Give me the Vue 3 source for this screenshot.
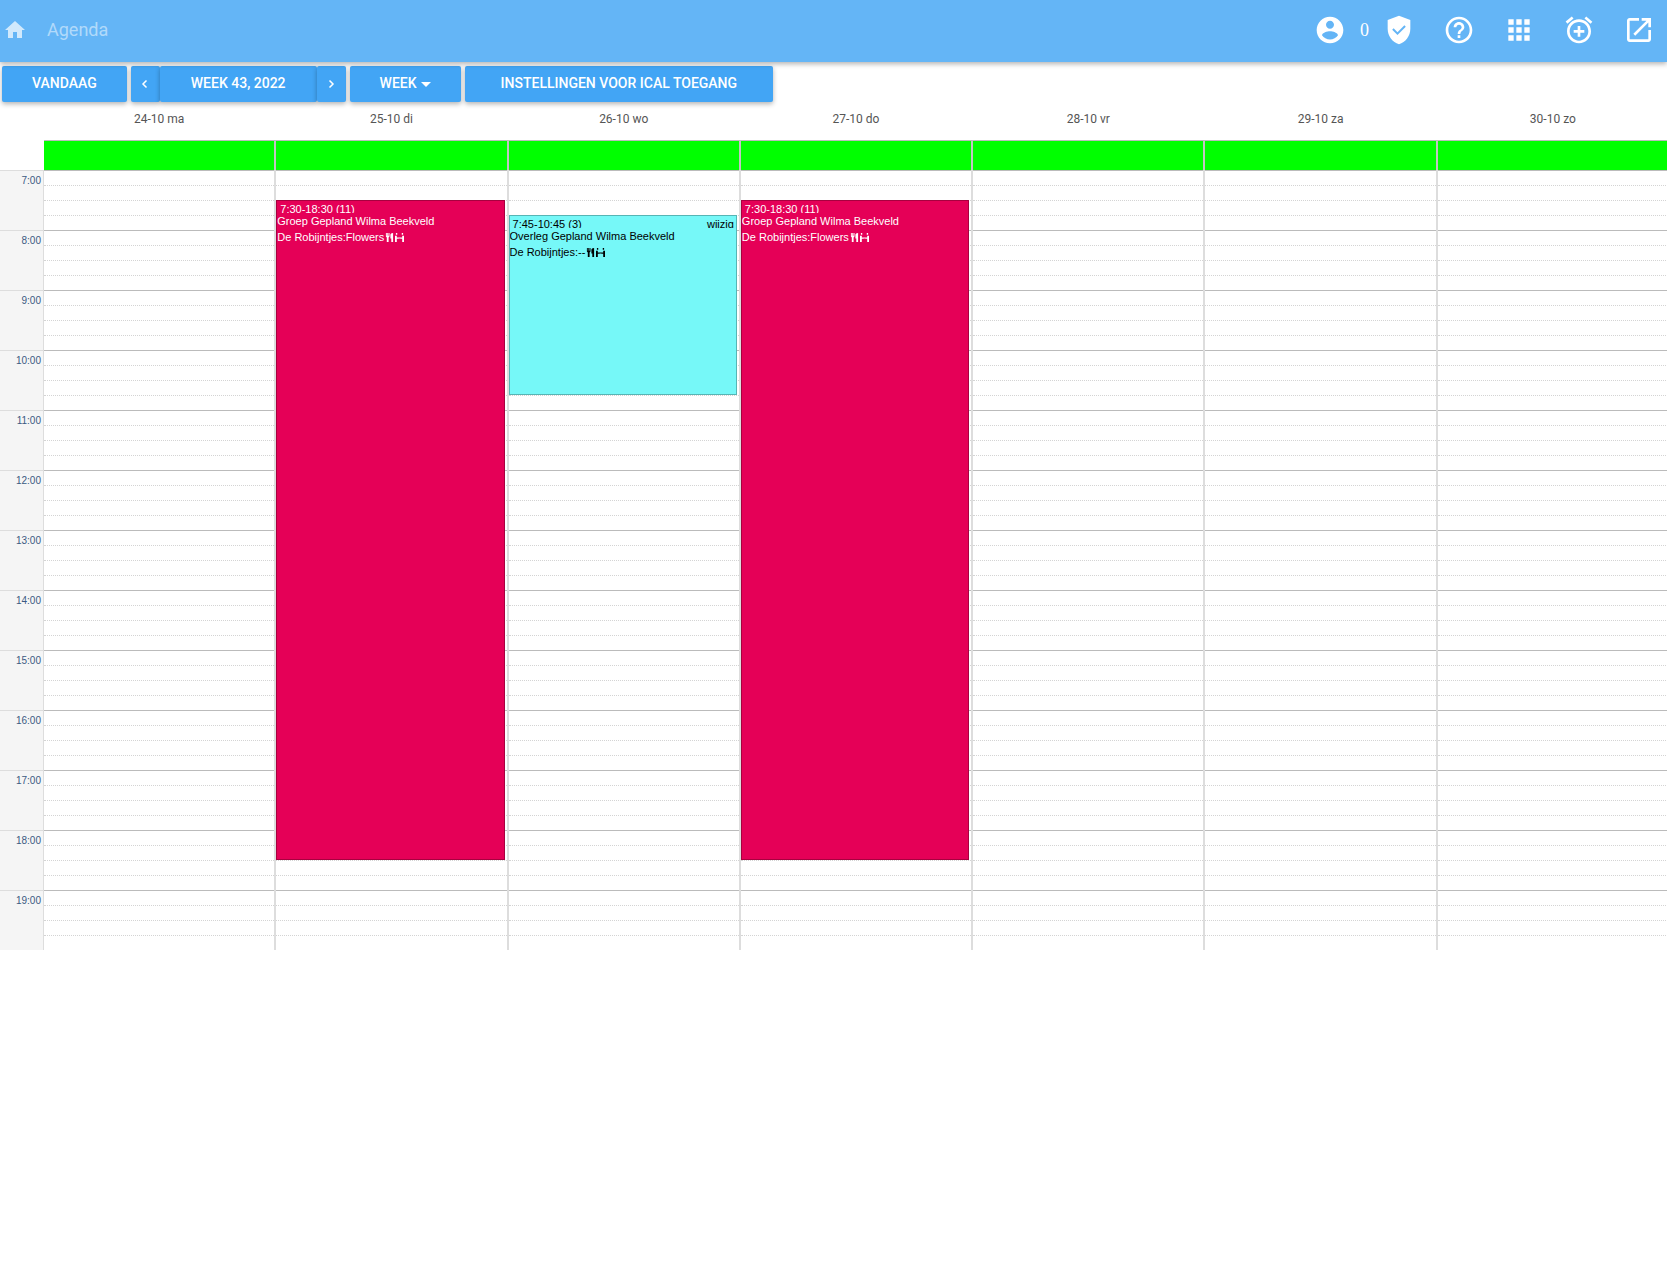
<template>
  <div class="agenda-page">
    <!-- Top bar -->
    <header class="app-bar">
      <nav class="app-nav">
        <a href="#" class="home-link" aria-label="Home">
          <svg viewBox="0 0 24 24"><path d="M10 20v-6h4v6h5v-8h3L12 3 2 12h3v8z" /></svg>
        </a>
        <a href="#" class="app-title">Agenda</a>
      </nav>
      <div class="app-actions">
        <button type="button" class="icon-btn account" aria-label="Account">
          <svg viewBox="0 0 24 24"><path :d="icons.account" /></svg>
        </button>
        <span class="counter">0</span>
        <button type="button" class="icon-btn shield" aria-label="Beveiliging">
          <svg viewBox="0 0 24 24"><path :d="icons.shield" /></svg>
        </button>
        <button v-for="action in actions" :key="action.label" type="button" class="icon-btn" :aria-label="action.label">
          <svg viewBox="0 0 24 24"><path :d="action.path" /></svg>
        </button>
      </div>
    </header>

    <!-- Toolbar -->
    <div class="toolbar">
      <button type="button" class="btn">Vandaag</button>
      <div class="btn-group">
        <button type="button" class="btn btn-arrow" aria-label="Vorige week">
          <svg viewBox="0 0 8 10"><path d="M5.500 1.500L2 5l3.500 3.500" /></svg>
        </button>
        <button type="button" class="btn btn-period">Week 43, 2022</button>
        <button type="button" class="btn btn-arrow" aria-label="Volgende week">
          <svg viewBox="0 0 8 10"><path d="M2.500 1.500L6 5 2.500 8.500" /></svg>
        </button>
      </div>
      <button type="button" class="btn">Week<span class="caret"></span></button>
      <button type="button" class="btn btn-wide">Instellingen voor iCal toegang</button>
    </div>

    <!-- Week calendar -->
    <main class="calendar">
      <div class="axis">
        <div class="axis-head"></div>
        <div v-for="hour in hours" :key="hour" class="axis-hour">{{ hour }}:00</div>
      </div>
      <div class="days">
        <section v-for="day in days" :key="day.label" class="day">
          <h2 class="day-head">{{ day.label }}</h2>
          <div class="all-day"></div>
          <div class="slots">
            <div
              v-for="n in slotCount"
              :key="n"
              class="slot"
              :class="{ 'slot-hour': n % 4 === 1 }"
              :style="{ gridRow: n }"
            ></div>
            <article
              v-for="event in day.events"
              :key="event.time"
              class="event"
              :class="event.type"
              :style="{ gridRow: slotRange(event) }"
            >
              <div class="event-time">
                <span>{{ event.time }}</span>
                <a v-if="event.editable" href="#">wijzig</a>
              </div>
              <div class="event-line">{{ event.title }}</div>
              <div class="event-line event-location">
                <span>{{ event.location }}</span>
                <svg class="event-icon" viewBox="0 0 10 10"><path :d="icons.cutlery" /></svg>
                <svg class="event-icon" viewBox="0 0 10 10"><path :d="icons.table" /></svg>
              </div>
            </article>
          </div>
        </section>
      </div>
    </main>
  </div>
</template>

<script setup>
const icons = {
  account: 'M12 2C6.480 2 2 6.480 2 12s4.480 10 10 10 10-4.480 10-10S17.520 2 12 2zm0 3c1.660 0 3 1.340 3 3s-1.340 3-3 3-3-1.340-3-3 1.340-3 3-3zm0 14.200c-2.500 0-4.710-1.280-6-3.220.03-1.990 4-3.080 6-3.080 1.990 0 5.970 1.090 6 3.080-1.290 1.940-3.500 3.220-6 3.220z',
  shield: 'M12 2L4 5v6.090c0 5.050 3.410 9.760 8 10.910 4.590-1.150 8-5.860 8-10.910V5l-8-3zm-1.060 13.540L7.200 11.800l1-1 2.740 2.740 4.860-4.860 1 1-5.860 5.860z',
  help: 'M11 18h2v-2h-2v2zm1-16C6.480 2 2 6.480 2 12s4.480 10 10 10 10-4.480 10-10S17.520 2 12 2zm0 18c-4.410 0-8-3.590-8-8s3.590-8 8-8 8 3.590 8 8-3.590 8-8 8zm0-14c-2.210 0-4 1.790-4 4h2c0-1.100.9-2 2-2s2 .9 2 2c0 2-3 1.750-3 5h2c0-2.250 3-2.500 3-5 0-2.210-1.790-4-4-4z',
  apps: 'M4 8h4V4H4v4zm6 12h4v-4h-4v4zm-6 0h4v-4H4v4zm0-6h4v-4H4v4zm6 0h4v-4h-4v4zm6-10v4h4V4h-4zm-6 4h4V4h-4v4zm6 6h4v-4h-4v4zm0 6h4v-4h-4v4z',
  alarm: 'M7.880 3.390L6.600 1.860 2 5.710l1.290 1.530 4.590-3.850zM22 5.720l-4.600-3.860-1.290 1.530 4.600 3.860L22 5.720zM12 4c-4.970 0-9 4.030-9 9s4.020 9 9 9c4.970 0 9-4.030 9-9s-4.030-9-9-9zm0 16c-3.870 0-7-3.130-7-7s3.130-7 7-7 7 3.130 7 7-3.130 7-7 7zm1-11h-2v3H8v2h3v3h2v-3h3v-2h-3V9z',
  open: 'M19 19H5V5h7V3H5c-1.110 0-2 .9-2 2v14c0 1.100.89 2 2 2h14c1.100 0 2-.9 2-2v-7h-2v7zM14 3v2h3.590l-9.830 9.830 1.410 1.410L19 6.410V10h2V3h-7z',
  cutlery: 'M1 0h1v3h.5V0h1v3H4V0h1v4L4 5v5H2V5L1 4zM6 2c0-1 1-2 3-2v10H7V6H6z',
  table: 'M1 0h1.500v2H1zM7.500 0H9v2H7.500zM0 3h2v2h6V3h2v7H8V6.500H6V6H4v.5H2V10H0z'
}

const actions = [
  { label: 'Help', path: icons.help },
  { label: 'Apps', path: icons.apps },
  { label: 'Herinnering toevoegen', path: icons.alarm },
  { label: 'Openen in nieuw venster', path: icons.open }
]

const firstHour = 7
const hours = Array.from({ length: 13 }, (_, i) => firstHour + i)
const slotCount = hours.length * 4

const groupEvent = {
  type: 'group',
  start: 7.5,
  end: 18.5,
  time: '7:30-18:30 (11)',
  title: 'Groep Gepland Wilma Beekveld',
  location: 'De Robijntjes:Flowers'
}

const meetingEvent = {
  type: 'meeting',
  start: 7.75,
  end: 10.75,
  time: '7:45-10:45 (3)',
  title: 'Overleg Gepland Wilma Beekveld',
  location: 'De Robijntjes:--',
  editable: true
}

const days = [
  { label: '24-10 ma', events: [] },
  { label: '25-10 di', events: [groupEvent] },
  { label: '26-10 wo', events: [meetingEvent] },
  { label: '27-10 do', events: [groupEvent] },
  { label: '28-10 vr', events: [] },
  { label: '29-10 za', events: [] },
  { label: '30-10 zo', events: [] }
]

// one grid row per quarter of an hour
const toRow = (time) => (time - firstHour) * 4 + 1
const slotRange = (event) => `${toRow(event.start)} / ${toRow(event.end)}`
</script>

<style>
body {
  margin: 0;
  background: #fff;
}
</style>

<style scoped>
.agenda-page {
  font-family: Roboto, "Liberation Sans", sans-serif;
  overflow: hidden;
}

.agenda-page * {
  box-sizing: border-box;
}

.app-bar {
  position: relative;
  z-index: 2;
  display: flex;
  align-items: center;
  justify-content: space-between;
  height: 62px;
  padding: 0 12px 2px 3px;
  background: #64b5f6;
  box-shadow: 0 2px 5px rgba(0, 0, 0, 0.3);
  color: #fff;
}

.app-nav {
  display: flex;
  align-items: center;
  gap: 20px;
}

.app-nav a {
  color: rgba(255, 255, 255, 0.5);
  text-decoration: none;
}

.home-link {
  height: 24px;
}

.home-link svg {
  width: 24px;
  height: 24px;
  fill: rgba(255, 255, 255, 0.7);
}

.app-title {
  font-size: 18px;
  line-height: 24px;
}

.app-actions {
  display: flex;
  align-items: center;
  gap: 28px;
}

.icon-btn {
  display: flex;
  align-items: center;
  justify-content: center;
  width: 32px;
  height: 32px;
  padding: 0;
  border: none;
  background: none;
  cursor: pointer;
}

.icon-btn svg {
  flex-shrink: 0;
  width: 32px;
  height: 32px;
  fill: #fff;
}

.icon-btn.shield svg {
  width: 34px;
  height: 34px;
}

.icon-btn.account {
  margin-right: -14px;
}

.counter {
  width: 10px;
  margin-right: -15px;
  font-family: "Liberation Serif", serif;
  font-size: 18px;
  line-height: 24px;
}

.toolbar {
  display: flex;
  gap: 4px;
  padding: 4px 2px 0;
}

.btn-group {
  display: flex;
}

.btn {
  height: 36px;
  padding: 0 30px 2px;
  border: none;
  border-radius: 2px;
  background: #42a5f5;
  box-shadow: 0 2px 5px rgba(0, 0, 0, 0.3);
  color: #fff;
  font-family: inherit;
  font-size: 14px;
  font-weight: 500;
  line-height: 34px;
  text-transform: uppercase;
  white-space: nowrap;
  cursor: pointer;
}

.btn-period {
  padding: 0 31px 2px;
}

.btn-wide {
  padding: 0 36px 2px;
}

.btn-arrow {
  width: 29px;
  padding: 0;
}

.btn-arrow svg {
  width: 8px;
  height: 10px;
  fill: none;
  stroke: #fff;
  stroke-width: 1.5;
}

.caret {
  display: inline-block;
  margin-left: 4px;
  border: 5px solid transparent;
  border-top-color: #fff;
  border-bottom: none;
  vertical-align: middle;
}

.calendar {
  display: flex;
}

.axis {
  flex: 0 0 44px;
}

.axis-head {
  height: 68px;
}

.axis-hour {
  height: 60px;
  padding: 4px 2px 0 0;
  border-top: 1px solid #ddd;
  border-right: 1px solid #ddd;
  background: #f5f5f5;
  color: #3b5a82;
  font-family: "Liberation Sans", sans-serif;
  font-size: 10px;
  line-height: 12px;
  text-align: right;
}

.days {
  display: grid;
  flex: 1;
  grid-template-columns: repeat(7, 1fr);
  margin-right: -3px;
}

.day {
  min-width: 0;
}

.day-head {
  height: 38px;
  margin: 0;
  padding-right: 2px;
  color: #555;
  font-size: 12px;
  font-weight: 400;
  line-height: 34px;
  text-align: center;
}

.all-day {
  height: 30px;
  border-top: 1px solid #bbb;
  border-right: 2px solid #c4c4c4;
  background: #0f0;
}

.slots {
  display: grid;
  grid-template-columns: minmax(0, 1fr);
  grid-template-rows: repeat(52, 15px);
  border-right: 2px solid #ddd;
}

.slot {
  grid-column: 1;
  border-top: 1px dotted #d4d4d4;
}

.slot-hour {
  border-top: 1px solid #bbb;
}

.event {
  grid-column: 1;
  margin-right: 2px;
  border: 1px solid;
  overflow: hidden;
  font-family: "Liberation Sans", sans-serif;
  font-size: 11px;
}

.event.group {
  border-color: #a8003f;
  background: #e50057;
  color: #fff;
}

.event.meeting {
  border-color: #56b5b5;
  background: #76f8f8;
  color: #000;
}

.event-time {
  display: flex;
  justify-content: space-between;
  height: 12px;
  padding: 2px 2px 0 3px;
  overflow: hidden;
  line-height: 13px;
}

.event-time a {
  color: inherit;
  text-decoration: none;
}

.event-line {
  height: 16px;
  line-height: 16px;
  white-space: nowrap;
}

.event-location {
  display: flex;
  align-items: center;
  gap: 1px;
}

.event-icon {
  width: 9px;
  height: 9px;
  fill: currentColor;
}
</style>
